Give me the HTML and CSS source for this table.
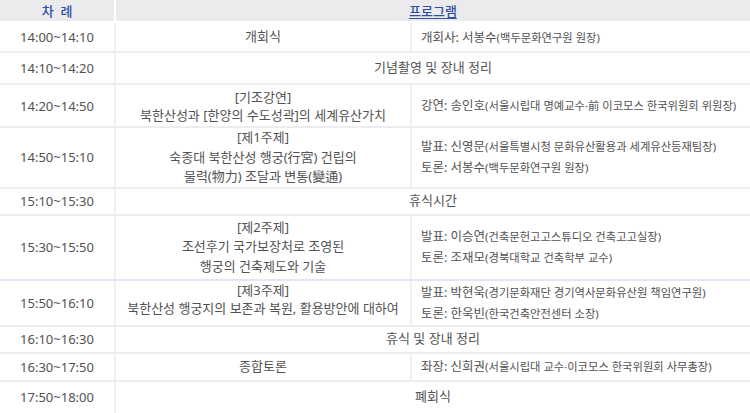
FILE: index.html
```html
<!DOCTYPE html>
<html lang="ko">
<head>
<meta charset="utf-8">
<title>차례</title>
<link rel="stylesheet" href="styles.css">
</head>
<body>
<table class="schedule">
  <colgroup>
    <col class="c-time">
    <col class="c-title">
    <col class="c-prog">
  </colgroup>
  <thead>
    <tr class="row-head">
      <th>차&nbsp;&nbsp;례</th>
      <th colspan="2"><a class="head-link">프로그램</a></th>
    </tr>
  </thead>
  <tbody>
    <tr class="row-a">
      <td class="time">14:00~14:10</td>
      <td class="title">개회식</td>
      <td class="prog"><div class="who"><span class="role">개회사: 서봉수</span><small>(백두문화연구원 원장)</small></div></td>
    </tr>
    <tr class="row-b">
      <td class="time">14:10~14:20</td>
      <td class="title" colspan="2">기념촬영 및 장내 정리</td>
    </tr>
    <tr class="row-c">
      <td class="time">14:20~14:50</td>
      <td class="title tight"><div>[기조강연]</div><div>북한산성과 [한양의 수도성곽]의 세계유산가치</div></td>
      <td class="prog"><div class="who"><span class="role">강연: 송인호</span><small>(서울시립대 명예교수·前 이코모스 한국위원회 위원장)</small></div></td>
    </tr>
    <tr class="row-d">
      <td class="time">14:50~15:10</td>
      <td class="title"><div>[제1주제]</div><div>숙종대 북한산성 행궁(行宮) 건립의</div><div>물력(物力) 조달과 변통(變通)</div></td>
      <td class="prog">
        <div class="who"><span class="role">발표: 신영문</span><small>(서울특별시청 문화유산활용과 세계유산등재팀장)</small></div>
        <div class="who"><span class="role">토론: 서봉수</span><small>(백두문화연구원 원장)</small></div>
      </td>
    </tr>
    <tr class="row-e">
      <td class="time">15:10~15:30</td>
      <td class="title" colspan="2">휴식시간</td>
    </tr>
    <tr class="row-f">
      <td class="time">15:30~15:50</td>
      <td class="title"><div class="tag">[제2주제]</div><div>조선후기 국가보장처로 조영된</div><div>행궁의 건축제도와 기술</div></td>
      <td class="prog">
        <div class="who"><span class="role">발표: 이승연</span><small>(건축문헌고고스튜디오 건축고고실장)</small></div>
        <div class="who"><span class="role">토론: 조재모</span><small>(경북대학교 건축학부 교수)</small></div>
      </td>
    </tr>
    <tr class="row-g">
      <td class="time">15:50~16:10</td>
      <td class="title tight lift"><div>[제3주제]</div><div>북한산성 행궁지의 보존과 복원, 활용방안에 대하여</div></td>
      <td class="prog">
        <div class="who"><span class="role">발표: 박현욱</span><small>(경기문화재단 경기역사문화유산원 책임연구원)</small></div>
        <div class="who"><span class="role">토론: 한욱빈</span><small>(한국건축안전센터 소장)</small></div>
      </td>
    </tr>
    <tr class="row-h">
      <td class="time">16:10~16:30</td>
      <td class="title" colspan="2">휴식 및 장내 정리</td>
    </tr>
    <tr class="row-i">
      <td class="time">16:30~17:50</td>
      <td class="title">종합토론</td>
      <td class="prog"><div class="who"><span class="role">좌장: 신희권</span><small>(서울시립대 교수·이코모스 한국위원회 사무총장)</small></div></td>
    </tr>
    <tr class="row-j">
      <td class="time">17:50~18:00</td>
      <td class="title" colspan="2">폐회식</td>
    </tr>
  </tbody>
</table>
</body>
</html>
```

FILE: styles.css
```css
html, body {
  margin: 0;
  padding: 0;
  background: #ffffff;
}

body {
  font-family: "Noto Sans", "Noto Sans CJK KR", sans-serif;
  color: #525252;
}

.schedule {
  width: 750px;
  border-collapse: collapse;
  table-layout: fixed;
  border-bottom: 2px solid #e4e4f2;
}

.c-time { width: 115px; }
.c-title { width: 296px; }
.c-prog { width: 339px; }

.schedule th {
  background: #ebebed;
  color: #2f4fa3;
  font-size: 13px;
  font-weight: 500;
  text-align: center;
  padding: 0;
  line-height: 20px;
  border-bottom: 2px solid #ffffff;
}

.schedule th + th {
  border-left: 2px solid #ffffff;
}

.head-link {
  text-decoration: underline;
  text-underline-offset: 2px;
  color: #2f4fa3;
}

.schedule td {
  padding: 0;
  font-size: 13px;
  vertical-align: middle;
  border-bottom: 2px solid #ececf1;
}

.schedule td + td {
  border-left: 2px solid #f0f0f2;
}

.time {
  text-align: center;
}

.title {
  text-align: center;
  line-height: 19.5px;
}

.title.tight {
  line-height: 18px;
}

.title.lift {
  padding-bottom: 8px;
}

.prog {
  padding-left: 9px !important;
  line-height: 20px;
}

.role {
  font-size: 12.5px;
}

.who small {
  font-size: 11.3px;
}

.row-head { height: 22px; }
.row-a { height: 30px; }
.row-b { height: 32px; }
.row-c { height: 43px; }
.row-d { height: 58px; }
.row-e { height: 27px; }
.row-f { height: 65px; }
.row-g { height: 43px; }
.row-h { height: 27px; }
.row-i { height: 28px; }
.row-j { height: 33px; }

.row-f td, .row-j td {
  border-bottom-color: #e4e4f2;
}
```
